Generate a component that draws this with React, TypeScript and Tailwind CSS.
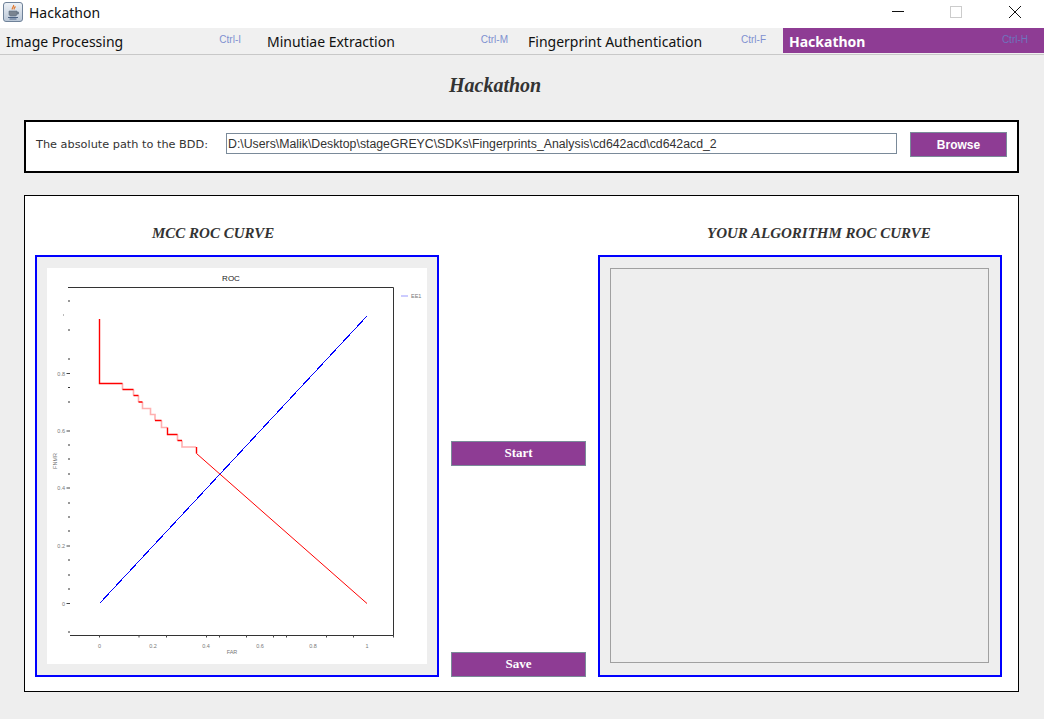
const menus = [
  { label: 'Image Processing', key: 'Ctrl-I', cls: 'w-[261px] pr-[20px]' },
  { label: 'Minutiae Extraction', key: 'Ctrl-M', cls: 'w-[261px] pr-[14px]' },
  { label: 'Fingerprint Authentication', key: 'Ctrl-F', cls: 'w-[261px] pr-[17px]' },
  { label: 'Hackathon', key: 'Ctrl-H', cls: 'w-[261px] pr-[16px]', active: true },
];

const yTicks = [301, 330, 359, 387.5, 402, 445, 459, 474, 503, 517, 531, 560, 575, 589, 632];
const yMajor = [
  { y: 373.5, label: '0.8' },
  { y: 431, label: '0.6' },
  { y: 488, label: '0.4' },
  { y: 546, label: '0.2' },
  { y: 603.5, label: '0' },
];
const xTicks = [99.5, 139, 166.5, 206.5, 219.5, 246.5, 273.5, 286.5, 326.5, 353.5, 393.5];
const xLabels = [
  { x: 99.5, label: '0' },
  { x: 153, label: '0.2' },
  { x: 206, label: '0.4' },
  { x: 260, label: '0.6' },
  { x: 313, label: '0.8' },
  { x: 367, label: '1' },
];

function JavaIcon() {
  return (
    <svg width="20" height="20" viewBox="0 0 20 20">
      <defs>
        <linearGradient id="jv" x1="0" y1="0" x2="0" y2="1">
          <stop offset="0" stopColor="#eef2f7" />
          <stop offset="1" stopColor="#b9c6d6" />
        </linearGradient>
      </defs>
      <rect x="0.5" y="0.5" width="19" height="19" rx="2.5" fill="url(#jv)" stroke="#6f8299" />
      <path d="M10.5 3c1 1.5-2 2.5-1.2 4.5M12.5 4.5c-1 1-2 1.5-1.2 3" fill="none" stroke="#e2762a" strokeWidth="1.2" />
      <path d="M6 9h8v3.2c0 1-1 1.8-2 1.8H8c-1 0-2-.8-2-1.8zM14 10h1.5v2H14" fill="#7a8490" stroke="#5c6b80" strokeWidth="0.6" />
      <path d="M5 15.5h10M6.5 17h7" stroke="#4d6384" strokeWidth="1" />
    </svg>
  );
}

function RocChart() {
  return (
    <svg viewBox="47 268 380 396" className="w-full h-full block bg-white">
      <text x="231" y="281" textAnchor="middle" fontSize="8" fontWeight="400" fill="#222" fontFamily="Liberation Sans, sans-serif">ROC</text>
      <path d="M68 287.5H393.5V635.5H70" fill="none" stroke="#333" strokeWidth="1" />
      {yTicks.map(y => <path key={y} d={`M68 ${y}h2`} stroke="#333" strokeWidth="1" />)}
      <path d="M63 315h1" stroke="#777" strokeWidth="1" />
      {yMajor.map(t => (
        <g key={t.y}>
          <path d={`M66.5 ${t.y}H70`} stroke="#444" strokeWidth="1" />
          <text x="65" y={t.y + 2} textAnchor="end" fontSize="5.5" fill="#777" fontFamily="Liberation Sans, sans-serif">{t.label}</text>
        </g>
      ))}
      {xTicks.map(x => <path key={x} d={`M${x} 635V637.5`} stroke="#444" strokeWidth="1" />)}
      {xLabels.map(t => (
        <text key={t.x} x={t.x} y="648" textAnchor="middle" fontSize="5.5" fill="#777" fontFamily="Liberation Sans, sans-serif">{t.label}</text>
      ))}
      <text x="232" y="654" textAnchor="middle" fontSize="5.5" fill="#777" fontFamily="Liberation Sans, sans-serif">FAR</text>
      <text transform="translate(57 461) rotate(-90)" textAnchor="middle" fontSize="5.5" fill="#777" fontFamily="Liberation Sans, sans-serif">FNMR</text>
      <path d="M401 296h7" stroke="#bbbbff" strokeWidth="1.5" />
      <text x="411" y="298" fontSize="5.5" fill="#777" fontFamily="Liberation Sans, sans-serif">EE1</text>
      <path d="M122.5 383.5V389.5M133.5 389.5V395.5M138.5 395.5V402M142.5 402V408.5H150.5V414.5H155V420.5M161.5 420.5V427.5H167M177.5 434.5V440.5M182 440.5V447H196" fill="none" stroke="#ffb0b0" strokeWidth="1.6" />
      <path d="M99.5 319V383.5H122.5M122.5 389.5H133.5M133.5 395.5H138.5M138.5 402H142.5M155 420.5H161.5M167.5 427.5V434.5H177.5M177.5 440.5H182M196.5 447V453.5" fill="none" stroke="#ff0000" strokeWidth="1.4" />
      <path d="M196.5 453.5L367 603.5" fill="none" stroke="#ff0000" strokeWidth="1" />
      <path d="M99.5 603.5L367 316" fill="none" stroke="#0000ff" strokeWidth="1" shapeRendering="crispEdges" />
    </svg>
  );
}

export default function App() {
  return (
    <div className="w-[1044px] h-[719px] overflow-hidden flex flex-col bg-[#eeeeee]">
      {/* Title bar */}
      <div className="h-[28px] flex items-center bg-white pl-[3px] pb-[4px]">
        <JavaIcon />
        <span className="ml-[6px] mt-[1px] text-[14px] text-[#111] font-['Noto_Sans',sans-serif]">Hackathon</span>
        <div className="ml-auto flex items-center h-full">
          <svg width="12" height="12" viewBox="0 0 12 12" className="mr-[46px]"><path d="M0 5.5H12" stroke="#111" strokeWidth="1" /></svg>
          <svg width="12" height="12" viewBox="0 0 12 12" className="mr-[47px]"><rect x="0.5" y="0.5" width="11" height="11" fill="none" stroke="#cccccc" /></svg>
          <svg width="12" height="12" viewBox="0 0 12 12" className="mr-[23px]"><path d="M0 0L12 12M12 0L0 12" stroke="#111" strokeWidth="1" /></svg>
        </div>
      </div>

      {/* Menu bar */}
      <div className="h-[27px] flex items-start bg-[#f0f0f0] border-b border-[#c8c8c8]">
        {menus.map(m => (
          <div
            key={m.key}
            className={`${m.cls} h-[25px] pl-[6px] flex items-center justify-between ${m.active ? 'bg-[#8e3c94]' : ''}`}
          >
            <span className={`mt-[2px] text-[14px] font-['Noto_Sans',sans-serif] ${m.active ? 'text-white font-bold' : 'text-[#111]'}`}>{m.label}</span>
            <span className={`text-[10px] -mt-[2px] font-['Liberation_Sans',sans-serif] ${m.active ? 'text-[#6f73bd]' : 'text-[#7f90d0]'}`}>{m.key}</span>
          </div>
        ))}
      </div>

      <h1 className="mt-[18px] ml-[449px] h-[27px] leading-[24px] text-[20px] font-bold italic text-[#333] font-['Liberation_Serif',serif]">Hackathon</h1>

      {/* Path box */}
      <div className="mt-[20px] ml-[24px] w-[995px] h-[53px] border-2 border-black bg-white flex items-start pl-[10px] pt-[10px]">
        <span className="w-[190px] mt-[4px] text-[11.3px] leading-[18px] text-[#333] font-['DejaVu_Sans',sans-serif]">The absolute path to the BDD:</span>
        <div className="w-[671px] h-[21px] mt-[1px] border border-[#7a8a99] flex items-center pl-[1px] pt-[2px] text-[12.3px] text-[#333] font-['Liberation_Sans',sans-serif] whitespace-nowrap">
          D:\Users\Malik\Desktop\stageGREYC\SDKs\Fingerprints_Analysis\cd642acd\cd642acd_2
        </div>
        <button className="ml-[13px] w-[97px] h-[25px] border border-[#7a8a99] bg-[#8e3c94] text-white text-[12px] font-bold font-['Liberation_Sans',sans-serif]">Browse</button>
      </div>

      {/* Curves */}
      <div className="mt-[22px] ml-[24px] w-[995px] h-[497px] border border-black bg-white pl-[10px]">
        <div className="grid grid-cols-[404px_135px_404px] gap-x-[12px]">
          <div className="h-[59px] col-span-2 flex items-end pb-[11px] pl-[117px] text-[15px] font-bold italic text-[#333] font-['Liberation_Serif',serif]">MCC ROC CURVE</div>
          <div className="h-[59px] flex items-end pb-[11px] pl-[109px] text-[15px] font-bold italic text-[#333] font-['Liberation_Serif',serif]">YOUR ALGORITHM ROC CURVE</div>

          <div className="h-[422px] border-2 border-[#0000ff] bg-[#eeeeee] px-[10px] py-[11px]">
            <RocChart />
          </div>
          <div className="h-[422px] flex flex-col justify-end gap-[186px]">
            <button className="h-[25px] pb-[2px] border border-[#7a8a99] bg-[#8e3c94] text-white text-[13px] font-bold font-['Liberation_Serif',serif]">Start</button>
            <button className="h-[25px] pb-[2px] border border-[#7a8a99] bg-[#8e3c94] text-white text-[13px] font-bold font-['Liberation_Serif',serif]">Save</button>
          </div>
          <div className="h-[422px] border-2 border-[#0000ff] bg-[#eeeeee] pl-[10px] pr-[11px] pt-[11px] pb-[12px]">
            <div className="h-full border border-[#a0a0a0] bg-[#eeeeee]" />
          </div>
        </div>
      </div>
    </div>
  );
}
